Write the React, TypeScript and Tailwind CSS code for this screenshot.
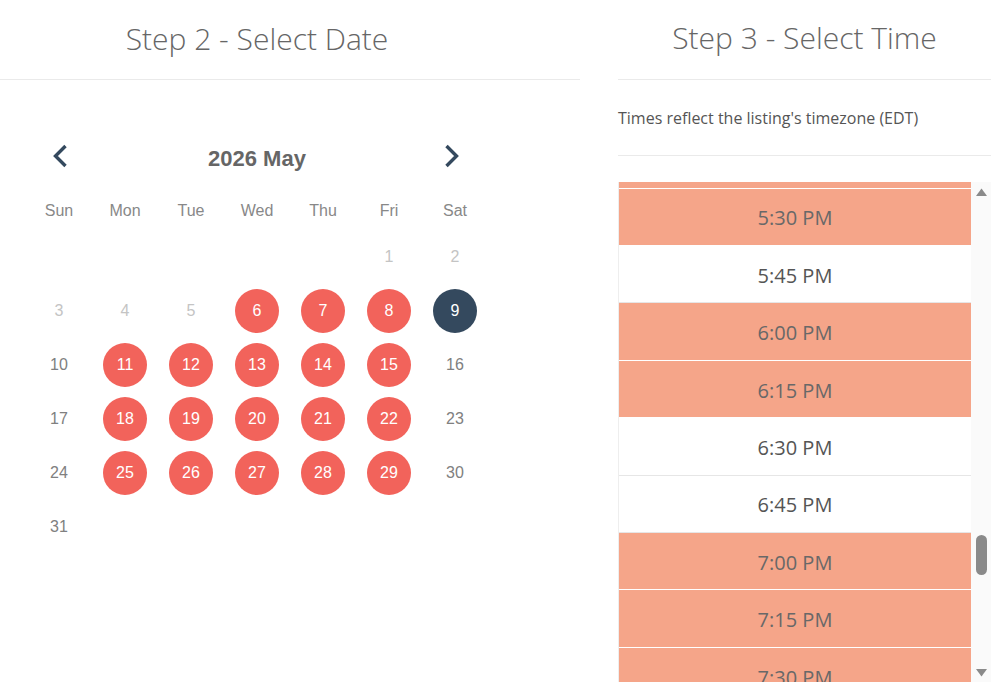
import React, { useLayoutEffect, useRef } from 'react';

const ITEM_H = 57.43;

const available = new Set([6, 7, 8, 11, 12, 13, 14, 15, 18, 19, 20, 21, 22, 25, 26, 27, 28, 29]);
const selectedDay = 9;
const weekdays = ['Sun', 'Mon', 'Tue', 'Wed', 'Thu', 'Fri', 'Sat'];

// booked slots show in salmon
const booked = new Set([
    '9:00 AM', '9:15 AM', '10:30 AM', '11:00 AM', '11:15 AM', '1:00 PM', '1:15 PM', '1:30 PM',
    '3:00 PM', '3:45 PM', '4:30 PM', '5:00 PM', '5:15 PM', '5:30 PM', '6:00 PM', '6:15 PM',
    '7:00 PM', '7:15 PM', '7:30 PM', '8:30 PM', '9:00 PM', '9:15 PM',
]);

const slots: string[] = [];
for (let m = 0; m < 24 * 60; m += 15) {
    const h = Math.floor(m / 60);
    const mm = m % 60;
    const h12 = h % 12 === 0 ? 12 : h % 12;
    slots.push(`${h12}:${mm === 0 ? '00' : mm} ${h < 12 ? 'AM' : 'PM'}`);
}

const Chevron = ({ dir }: { dir: 'left' | 'right' }) => (
    <svg width="16" height="24" viewBox="0 0 16 24" fill="none">
        <path
            d={dir === 'left' ? 'M13.5 2 L3.5 12 L13.5 22' : 'M2.5 2 L12.5 12 L2.5 22'}
            stroke="#34495e"
            strokeWidth="3.4"
            strokeLinecap="butt"
        />
    </svg>
);

const Calendar = () => {
    const cells: (number | null)[] = [null, null, null, null, null];
    for (let d = 1; d <= 31; d++) cells.push(d);
    while (cells.length % 7) cells.push(null);

    return (
        <div className="ml-[26px] mt-[56px] w-[462px] font-['Liberation_Sans',Arial,sans-serif]">
            <div className="flex h-[40px] items-center">
                <div className="flex w-[72px] justify-start pl-[26px]">
                    <Chevron dir="left" />
                </div>
                <div className="flex-1 pt-[5px] text-center text-[22px] font-bold text-[#666]">2026 May</div>
                <div className="flex w-[72px] justify-center">
                    <Chevron dir="right" />
                </div>
            </div>
            <div className="mt-[16px] grid h-[38px] grid-cols-7 items-center">
                {weekdays.map((w) => (
                    <div key={w} className="text-center text-[16px] text-[#888]">{w}</div>
                ))}
            </div>
            <div className="grid grid-cols-7">
                {cells.map((d, i) => (
                    <div key={i} className="flex h-[54px] items-center justify-center text-[16px]">
                        {d === null ? null : d === selectedDay ? (
                            <span className="flex h-[44px] w-[44px] items-center justify-center rounded-full bg-[#34495e] text-white">{d}</span>
                        ) : available.has(d) ? (
                            <span className="flex h-[44px] w-[44px] items-center justify-center rounded-full bg-[#f2635b] text-white">{d}</span>
                        ) : (
                            <span className={d < 6 ? 'text-[#c4c4c4]' : 'text-[#808080]'}>{d}</span>
                        )}
                    </div>
                ))}
            </div>
        </div>
    );
};

const TimeList = () => {
    const listRef = useRef<HTMLDivElement | null>(null);

    useLayoutEffect(() => {
        if (listRef.current) listRef.current.scrollTop = 70 * ITEM_H - 7;
    }, []);

    return (
        <div className="mt-[26px] flex h-[500px]">
            <div
                ref={listRef}
                className="h-full w-[353px] overflow-y-scroll border-l border-[#eee] [scrollbar-width:none] [&::-webkit-scrollbar]:hidden"
            >
                {slots.map((s) => (
                    <div
                        key={s}
                        style={{ height: ITEM_H }}
                        className={`flex items-center justify-center border-b pt-[3px] text-[20px] ${
                            booked.has(s) ? 'border-white bg-[#f5a589] text-[#686868]' : 'border-[#e6e6e6] bg-white text-[#555]'
                        }`}
                    >
                        {s}
                    </div>
                ))}
            </div>
            <div className="relative h-full w-[20px] bg-[#fafafa]">
                <svg className="absolute left-[5px] top-[6px]" width="11" height="8" viewBox="0 0 11 8">
                    <path d="M5.5 0.5 L11 8 L0 8 Z" fill="#8a8a8a" />
                </svg>
                <div className="absolute left-[5px] top-[353px] h-[40px] w-[11px] rounded-full bg-[#8a8a8a]" />
                <svg className="absolute bottom-[5px] left-[5px]" width="11" height="8" viewBox="0 0 11 8">
                    <path d="M0 0 L11 0 L5.5 7.5 Z" fill="#8a8a8a" />
                </svg>
            </div>
        </div>
    );
};

export default function App() {
    return (
        <div className="flex h-[690px] w-[991px] overflow-hidden bg-white font-['Open_Sans',sans-serif]">
            <div className="w-[580px] shrink-0">
                <div className="h-[80px] border-b border-[#eaeaea]">
                    <div className="flex h-[79px] w-[514px] items-center justify-center pb-[3px] text-[30px] font-light text-[#666]">
                        Step 2 - Select Date
                    </div>
                </div>
                <Calendar />
            </div>
            <div className="ml-[38px] w-[373px] shrink-0">
                <div className="flex h-[80px] items-center justify-center border-b border-[#eaeaea] pb-[4px] text-[30px] font-light text-[#666]">
                    Step 3 - Select Time
                </div>
                <div className="flex h-[76px] items-center border-b border-[#eaeaea] text-[16px] text-[#555]">
                    Times reflect the listing's timezone (EDT)
                </div>
                <TimeList />
            </div>
        </div>
    );
}
